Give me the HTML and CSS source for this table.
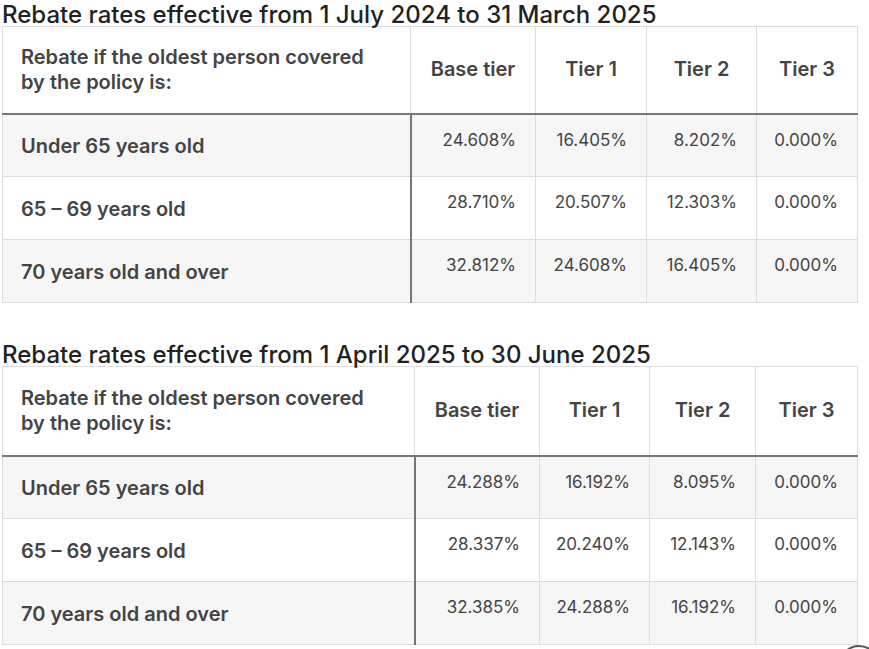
FILE: index.html
```html
<!DOCTYPE html>
<html lang="en">
<head>
<meta charset="utf-8">
<title>Rebate rates</title>
<link rel="stylesheet" href="styles.css">
</head>
<body>
<main class="page">
  <section class="block block-first">
    <h2 class="title">Rebate rates effective from 1 July 2024 to 31 March 2025</h2>
    <table class="rates rates-a">
      <colgroup>
        <col class="c-label"><col class="c-base"><col class="c-t1"><col class="c-t2"><col class="c-t3">
      </colgroup>
      <thead>
        <tr class="head-row">
          <th class="h-label">Rebate if the oldest person covered by the policy is:</th>
          <th class="h-tier">Base tier</th>
          <th class="h-tier">Tier 1</th>
          <th class="h-tier">Tier 2</th>
          <th class="h-tier">Tier 3</th>
        </tr>
      </thead>
      <tbody>
        <tr class="row row-shade"><th class="r-label">Under 65 years old</th><td>24.608%</td><td>16.405%</td><td>8.202%</td><td>0.000%</td></tr>
        <tr class="row"><th class="r-label">65 – 69 years old</th><td>28.710%</td><td>20.507%</td><td>12.303%</td><td>0.000%</td></tr>
        <tr class="row row-shade"><th class="r-label">70 years old and over</th><td>32.812%</td><td>24.608%</td><td>16.405%</td><td>0.000%</td></tr>
      </tbody>
    </table>
  </section>

  <section class="block block-second">
    <h2 class="title">Rebate rates effective from 1 April 2025 to 30 June 2025</h2>
    <table class="rates rates-b">
      <colgroup>
        <col class="c-label"><col class="c-base"><col class="c-t1"><col class="c-t2"><col class="c-t3">
      </colgroup>
      <thead>
        <tr class="head-row">
          <th class="h-label">Rebate if the oldest person covered by the policy is:</th>
          <th class="h-tier">Base tier</th>
          <th class="h-tier">Tier 1</th>
          <th class="h-tier">Tier 2</th>
          <th class="h-tier">Tier 3</th>
        </tr>
      </thead>
      <tbody>
        <tr class="row row-shade"><th class="r-label">Under 65 years old</th><td>24.288%</td><td>16.192%</td><td>8.095%</td><td>0.000%</td></tr>
        <tr class="row"><th class="r-label">65 – 69 years old</th><td>28.337%</td><td>20.240%</td><td>12.143%</td><td>0.000%</td></tr>
        <tr class="row row-shade"><th class="r-label">70 years old and over</th><td>32.385%</td><td>24.288%</td><td>16.192%</td><td>0.000%</td></tr>
      </tbody>
    </table>
  </section>
  <span class="to-top" aria-hidden="true"></span>
</main>
</body>
</html>
```

FILE: styles.css
```css
* { box-sizing: border-box; }

html, body {
  margin: 0;
  padding: 0;
  background: #ffffff;
}

body {
  font-family: Inter, "Noto Sans", "Liberation Sans", sans-serif;
  color: #444444;
  overflow: hidden;
}

.page {
  padding: 0 0 0 2px;
  width: 869px;
  height: 649px;
  position: relative;
  overflow: hidden;
}

.block-second {
  margin-top: 37px;
}

.title {
  margin: 0 0 -3px;
  font-size: 24px;
  line-height: 29px;
  font-weight: 500;
  color: #222222;
}

.rates {
  margin-top: 0;
  width: 855px;
  border-collapse: collapse;
  table-layout: fixed;
  border: 1px solid #dddddd;
}

.rates-a .c-label { width: 408px; }
.rates-a .c-base { width: 125px; }
.rates-a .c-t1 { width: 111px; }
.rates-a .c-t2 { width: 110px; }
.rates-a .c-t3 { width: 101px; }

.rates-b .c-label { width: 412px; }
.rates-b .c-base { width: 125px; }
.rates-b .c-t1 { width: 110px; }
.rates-b .c-t2 { width: 106px; }
.rates-b .c-t3 { width: 102px; }

.rates th,
.rates td {
  border: 1px solid #dddddd;
}

.head-row th {
  border-bottom: 2px solid #777777;
  background: #ffffff;
  vertical-align: middle;
  font-weight: 600;
  font-size: 20px;
  line-height: 25px;
  color: #444444;
}

.rates-a .head-row { height: 87px; }
.rates-b .head-row { height: 89px; }

.h-label {
  text-align: left;
  padding: 0 36px 0 18px;
}

.h-tier {
  text-align: center;
  padding: 0 4px;
}

.row { height: 63px; }

.row-shade th,
.row-shade td {
  background: #f6f6f6;
}

.r-label {
  text-align: left;
  vertical-align: middle;
  padding: 2px 18px 0;
  font-weight: 600;
  font-size: 20px;
  line-height: 25px;
  color: #444444;
  border-right: 2px solid #777777 !important;
}

.rates td {
  text-align: right;
  vertical-align: top;
  padding: 13px 19px 0 8px;
  font-size: 17px;
  line-height: 25px;
  font-weight: 400;
  color: #444444;
}

.to-top {
  position: absolute;
  left: 839px;
  top: 645px;
  width: 40px;
  height: 40px;
  border-radius: 50%;
  border: 2px solid #555555;
}
```
